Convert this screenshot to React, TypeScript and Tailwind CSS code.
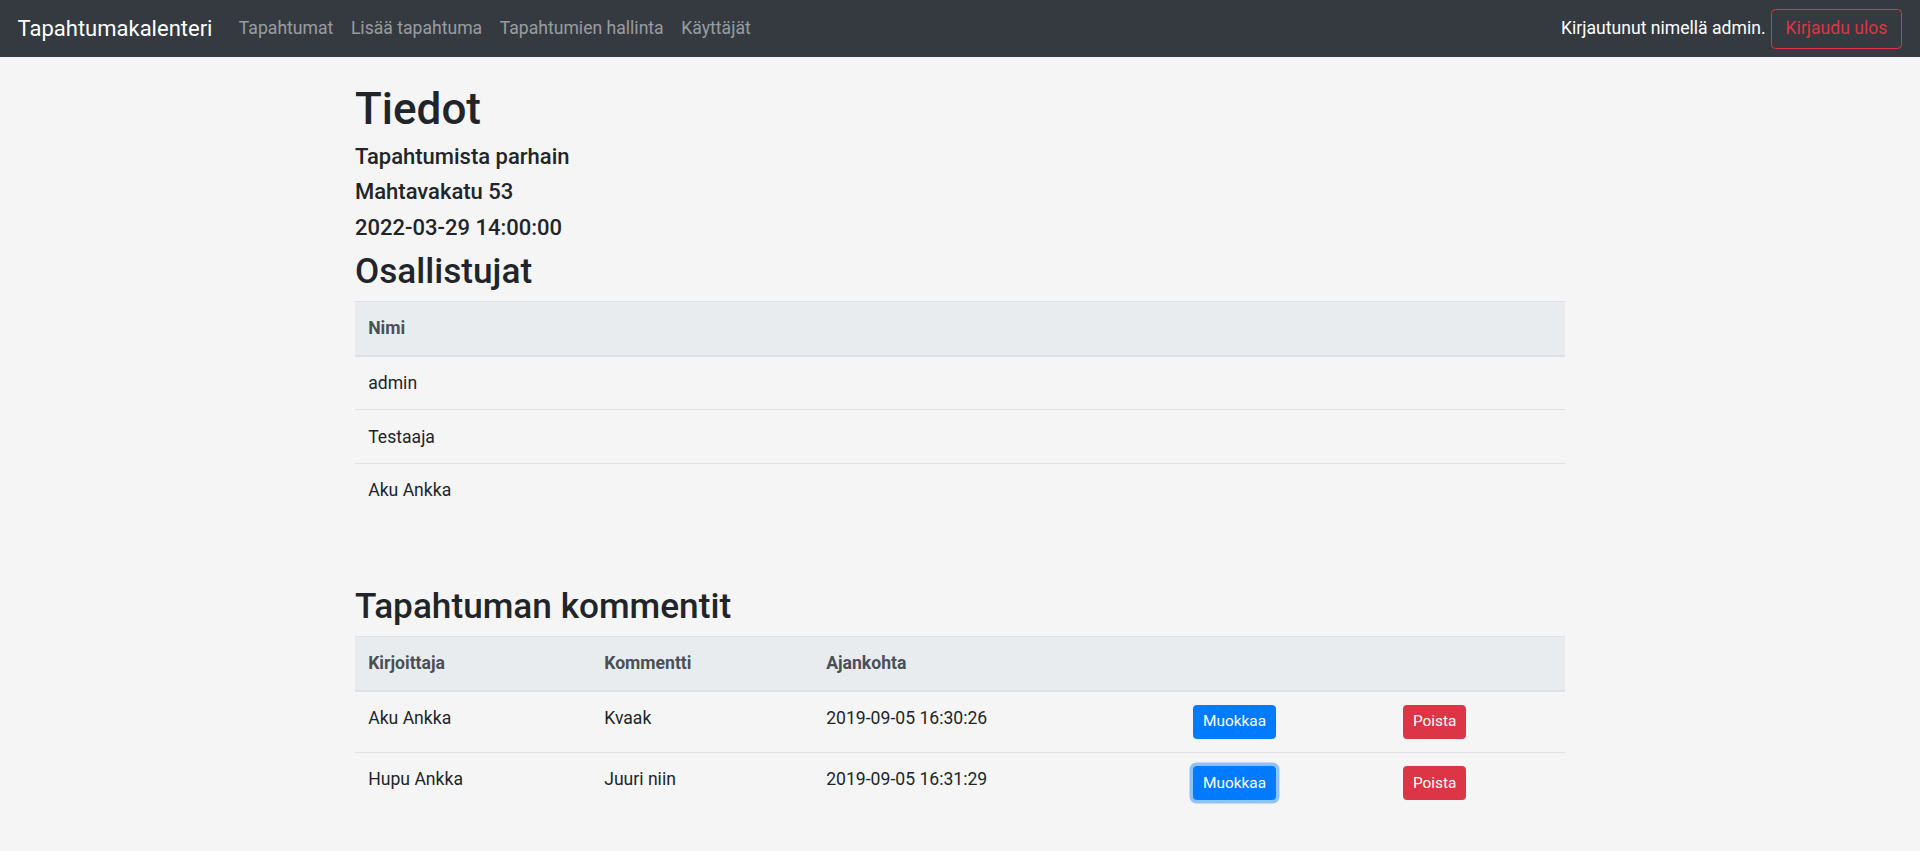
import React from "react";

const font = { fontFamily: "Roboto, 'Liberation Sans', sans-serif" };

function Navbar() {
  return (
    <nav className="h-[57px] bg-[#343a40] flex items-center justify-between px-[17.6px]">
      <div className="flex items-center">
        <span className="text-[22px] leading-[33px] text-white mr-[17.6px]">Tapahtumakalenteri</span>
        {["Tapahtumat", "Lisää tapahtuma", "Tapahtumien hallinta", "Käyttäjät"].map((l) => (
          <span key={l} className="px-[8.8px] text-[17.6px] leading-[26.4px] text-[rgba(255,255,255,0.5)]">
            {l}
          </span>
        ))}
      </div>
      <div className="flex items-center">
        <span className="text-[17.6px] leading-[26.4px] text-white mr-[5px]">Kirjautunut nimellä admin.</span>
        <button className="h-[40px] px-[14px] border border-[#dc3545] rounded-[4.4px] text-[#dc3545] text-[17.6px] leading-[26.4px]">
          Kirjaudu ulos
        </button>
      </div>
    </nav>
  );
}

const th = "px-[13.2px] py-[13.2px] text-left font-bold text-[#495057] bg-[#e9ecef] border-t border-b-2 border-[#dee2e6] align-bottom";
const td = "px-[13.2px] py-[13.2px] border-t border-[#dee2e6] align-top";

export default function App() {
  return (
    <div style={font} className="min-h-[851px] bg-[#f5f5f5] text-[#212529] text-[17.6px] leading-[26.4px]">
      <Navbar />
      <div className="w-[1210px] mx-auto pt-[25.6px]">
        <h1 className="text-[44px] leading-[52.8px] font-medium mb-[8.8px]">Tiedot</h1>
        <h5 className="text-[22px] leading-[26.4px] font-medium mb-[8.8px]">Tapahtumista parhain</h5>
        <h5 className="text-[22px] leading-[26.4px] font-medium mb-[8.8px]">Mahtavakatu 53</h5>
        <h5 className="text-[22px] leading-[26.4px] font-medium mb-[8.8px]">2022-03-29 14:00:00</h5>
        <h2 className="text-[35.2px] leading-[42.24px] font-medium mb-[8.8px]">Osallistujat</h2>
        <table className="w-full border-collapse">
          <thead>
            <tr>
              <th className={th}>Nimi</th>
            </tr>
          </thead>
          <tbody>
            {["admin", "Testaaja", "Aku Ankka"].map((n) => (
              <tr key={n}>
                <td className={td}>{n}</td>
              </tr>
            ))}
          </tbody>
        </table>
        <h2 className="text-[35.2px] leading-[42.24px] font-medium mt-[68px] mb-[8.8px]">Tapahtuman kommentit</h2>
        <table className="w-full border-collapse table-fixed">
          <colgroup>
            <col className="w-[236px]" />
            <col className="w-[222px]" />
            <col className="w-[367px]" />
            <col className="w-[210px]" />
            <col className="w-[175px]" />
          </colgroup>
          <thead>
            <tr>
              <th className={th}>Kirjoittaja</th>
              <th className={th}>Kommentti</th>
              <th className={th}>Ajankohta</th>
              <th className={th}></th>
              <th className={th}></th>
            </tr>
          </thead>
          <tbody>
            {[
              { a: "Aku Ankka", k: "Kvaak", t: "2019-09-05 16:30:26", focus: false },
              { a: "Hupu Ankka", k: "Juuri niin", t: "2019-09-05 16:31:29", focus: true },
            ].map((r) => (
              <tr key={r.a}>
                <td className={td}>{r.a}</td>
                <td className={td}>{r.k}</td>
                <td className={td}>{r.t}</td>
                <td className={td}>
                  <button
                    className={
                      "h-[33.9px] px-[8.8px] bg-[#007bff] border border-[#007bff] rounded-[3.5px] text-white text-[15.4px] leading-[23.1px] " +
                      (r.focus ? "shadow-[0_0_0_3.5px_rgba(38,143,255,0.5)]" : "")
                    }
                  >
                    Muokkaa
                  </button>
                </td>
                <td className={td}>
                  <button className="h-[33.9px] px-[8.8px] bg-[#dc3545] border border-[#dc3545] rounded-[3.5px] text-white text-[15.4px] leading-[23.1px]">
                    Poista
                  </button>
                </td>
              </tr>
            ))}
          </tbody>
        </table>
      </div>
    </div>
  );
}
